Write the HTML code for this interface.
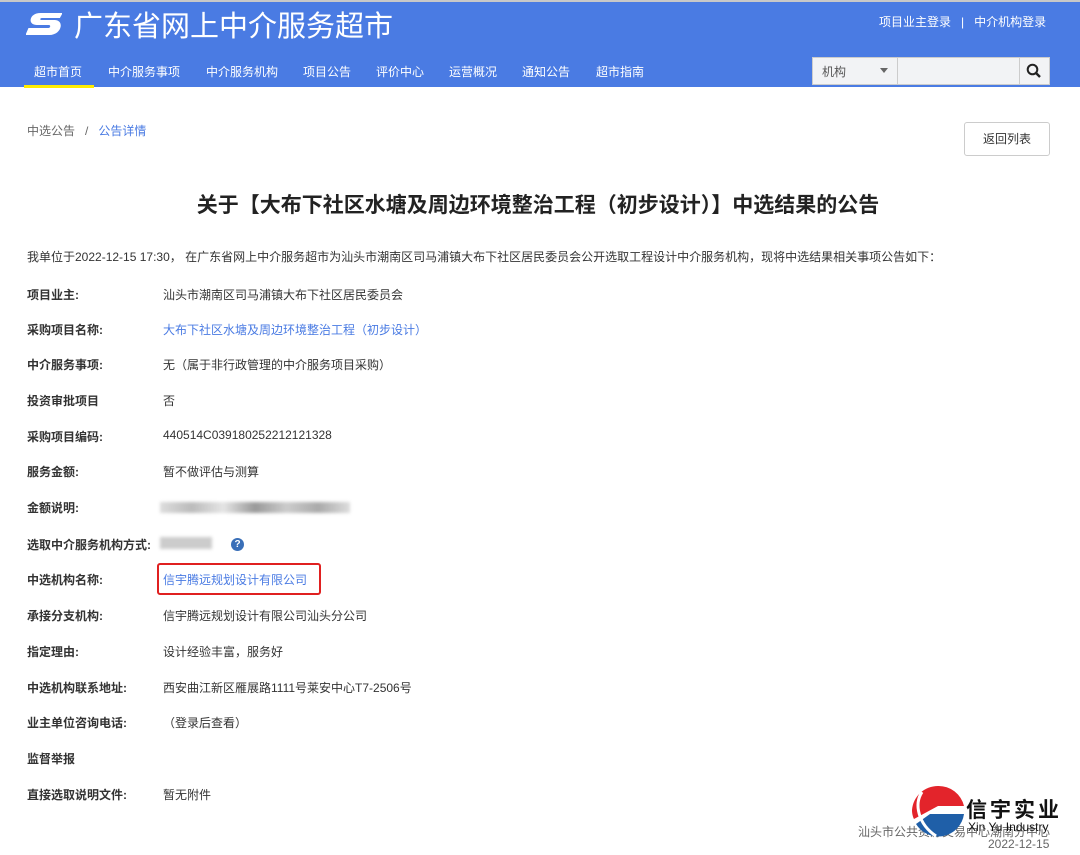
<!DOCTYPE html><html><head><meta charset="utf-8"><style>
*{margin:0;padding:0;box-sizing:border-box}
body{width:1080px;height:855px;overflow:hidden;background:#fff;font-family:"Liberation Sans","Noto Sans CJK SC",sans-serif;color:#333;position:relative}
.hd{position:absolute;left:0;top:0;width:1080px;height:87px;background:#4a7be3;border-top:2px solid #c8c8c8}
.a{position:absolute;white-space:nowrap}
.nav{color:#fff;font-size:12px;top:61px}
.lb{position:absolute;left:27px;font-size:12px;font-weight:bold;color:#333}
.v{position:absolute;left:163px;font-size:12px;color:#333}
.bl{color:#4a7be3}
</style></head><body>
<div class="hd">
<svg class="a" style="left:26px;top:8px" width="36" height="28" viewBox="0 0 36 28"><path d="M34 3H12C6 3 3 6 3 9.5 3 13 6 15 10 15H22C24 15 24 18 22 18H2L0 25H24C30 25 34 21 34 16.5 34 12.5 31 10 27 10H14C12 10 12 8 14 8H32Z" fill="#fff" transform="skewX(-8) translate(3,0)"/></svg>
<div class="a" style="left:74px;top:1px;font-size:29px;color:#fff">广东省网上中介服务超市</div>
<div class="a" style="left:879px;top:11px;font-size:12px;color:#fff">项目业主登录 &nbsp; | &nbsp; 中介机构登录</div>
<div class="a nav" style="left:34px">超市首页</div>
<div class="a" style="left:24px;top:83px;width:70px;height:3px;background:#ffec00"></div>
<div class="a nav" style="left:108px">中介服务事项</div>
<div class="a nav" style="left:206px">中介服务机构</div>
<div class="a nav" style="left:303px">项目公告</div>
<div class="a nav" style="left:376px">评价中心</div>
<div class="a nav" style="left:449px">运营概况</div>
<div class="a nav" style="left:522px">通知公告</div>
<div class="a nav" style="left:596px">超市指南</div>
<div class="a" style="left:812px;top:55px;width:238px;height:28px;background:#f2f3f5;border:1px solid #ccc"></div>
<div class="a" style="left:897px;top:55px;width:1px;height:28px;background:#ccc"></div>
<div class="a" style="left:1019px;top:55px;width:1px;height:28px;background:#ccc"></div>
<div class="a" style="left:822px;top:61px;font-size:12px;color:#555">机构</div>
<div class="a" style="left:880px;top:66px;border:4px solid transparent;border-top:5px solid #666"></div>
<svg class="a" style="left:1026px;top:61px" width="16" height="16" viewBox="0 0 16 16"><circle cx="6.5" cy="6.5" r="4.8" fill="none" stroke="#222" stroke-width="2"/><path d="M10 10L14 14" stroke="#222" stroke-width="2.4"/></svg>
</div>
<div class="a" style="left:27px;top:122px;font-size:12px;color:#666">中选公告 &nbsp; / &nbsp; <span class="bl">公告详情</span></div>
<div class="a" style="left:964px;top:122px;width:86px;height:34px;border:1px solid #ccc;border-radius:3px;font-size:12px;text-align:center;line-height:32px;color:#333">返回列表</div>
<div class="a" style="left:0;width:1076px;text-align:center;top:189px;font-size:21px;font-weight:bold;color:#222">关于【大布下社区水塘及周边环境整治工程（初步设计）】中选结果的公告</div>
<div class="a" style="left:27px;top:248px;font-size:12px">我单位于2022-12-15 17:30， 在广东省网上中介服务超市为汕头市潮南区司马浦镇大布下社区居民委员会公开选取工程设计中介服务机构，现将中选结果相关事项公告如下：</div>
<div class="lb" style="top:286px">项目业主:</div><div class="v" style="top:286px">汕头市潮南区司马浦镇大布下社区居民委员会</div>
<div class="lb" style="top:321px">采购项目名称:</div><div class="v bl" style="top:321px">大布下社区水塘及周边环境整治工程（初步设计）</div>
<div class="lb" style="top:356px">中介服务事项:</div><div class="v" style="top:356px">无（属于非行政管理的中介服务项目采购）</div>
<div class="lb" style="top:392px">投资审批项目</div><div class="v" style="top:392px">否</div>
<div class="lb" style="top:428px">采购项目编码:</div><div class="v" style="top:428px">440514C039180252212121328</div>
<div class="lb" style="top:463px">服务金额:</div><div class="v" style="top:463px">暂不做评估与测算</div>
<div class="lb" style="top:499px">金额说明:</div><div class="a" style="left:160px;top:502px;width:190px;height:11px;background:linear-gradient(90deg,#ddd,#bbb,#e5e5e5,#999,#ccc,#aaa,#ddd);filter:blur(1.5px)"></div>
<div class="lb" style="top:536px">选取中介服务机构方式:</div><div class="a" style="left:160px;top:537px;width:52px;height:12px;background:#ccc;filter:blur(1.5px)"></div>
<div class="a" style="left:231px;top:538px;width:13px;height:13px;border-radius:50%;background:#3a6fb8;color:#fff;font-size:10px;font-weight:bold;text-align:center;line-height:13px">?</div>
<div class="lb" style="top:571px">中选机构名称:</div><div class="v bl" style="top:571px">信宇腾远规划设计有限公司</div>
<div class="a" style="left:157px;top:563px;width:164px;height:32px;border:2px solid #e02020;border-radius:3px"></div>
<div class="lb" style="top:607px">承接分支机构:</div><div class="v" style="top:607px">信宇腾远规划设计有限公司汕头分公司</div>
<div class="lb" style="top:643px">指定理由:</div><div class="v" style="top:643px">设计经验丰富，服务好</div>
<div class="lb" style="top:679px">中选机构联系地址:</div><div class="v" style="top:679px">西安曲江新区雁展路1111号莱安中心T7-2506号</div>
<div class="lb" style="top:714px">业主单位咨询电话:</div><div class="v" style="top:714px">（登录后查看）</div>
<div class="lb" style="top:750px">监督举报</div>
<div class="lb" style="top:786px">直接选取说明文件:</div><div class="v" style="top:786px">暂无附件</div>
<div class="a" style="left:858px;top:823px;font-size:12px;color:#666">汕头市公共资源交易中心潮南分中心</div>
<div class="a" style="left:988px;top:837px;font-size:12px;color:#666">2022-12-15</div>
<svg class="a" style="left:908px;top:784px" width="60" height="56" viewBox="0 0 60 56"><path d="M30 2A26 26 0 0 0 4 26C4 30 5 33 6 35L30 22L56 22A26 26 0 0 0 30 2Z" fill="#e3242b"/><path d="M8 40A26 26 0 0 0 56 30L22 30Z" fill="#1f5fa8"/><path d="M14 8C6 20 10 40 28 52" stroke="#fff" stroke-width="3" fill="none"/></svg>
<div class="a" style="left:966px;top:794px;font-size:21px;font-weight:bold;color:#111;letter-spacing:3px">信宇实业</div>
<div class="a" style="left:968px;top:820px;font-size:12px;color:#111">Xin Yu Industry</div>
</body></html>
